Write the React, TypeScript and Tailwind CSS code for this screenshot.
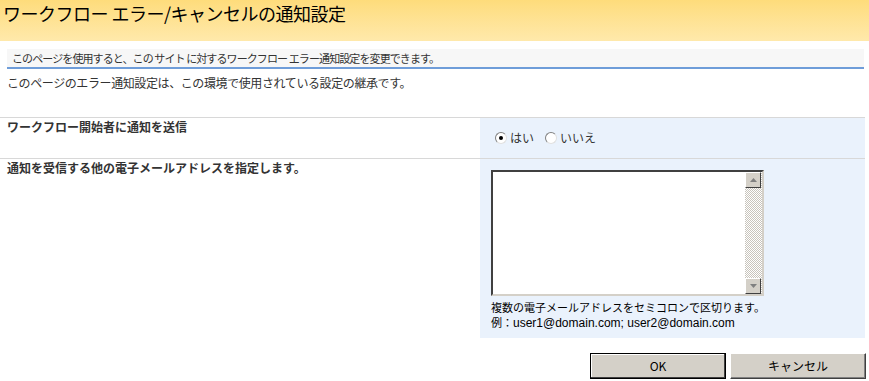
import { useState } from 'react'

const font = { fontFamily: '"Noto Sans CJK JP", "Noto Sans", sans-serif' }

function Radio({ checked, label, onClick }: { checked: boolean; label: string; onClick: () => void }) {
  return (
    <label className="flex cursor-pointer items-center gap-[3px]" onClick={onClick}>
      <span className="flex h-[12px] w-[12px] items-center justify-center rounded-full border border-t-[#808080] border-l-[#808080] border-r-[#e0e0e0] border-b-[#e0e0e0] bg-white">
        {checked && <span className="h-[4px] w-[4px] rounded-full bg-black" />}
      </span>
      <span>{label}</span>
    </label>
  )
}

function ScrollArrow({ up }: { up: boolean }) {
  return (
    <div className="flex h-[16px] w-[16px] items-center justify-center border border-t-white border-l-white border-r-[#404040] border-b-[#404040] bg-[#d4d0c8]">
      <svg width="7" height="4" viewBox="0 0 7 4">
        {up ? <path d="M3.5 0 L7 4 L0 4 Z" fill="#808080" /> : <path d="M0 0 L7 0 L3.5 4 Z" fill="#808080" />}
      </svg>
    </div>
  )
}

export default function App() {
  const [notify, setNotify] = useState(true)

  return (
    <div className="h-[381px] w-[869px] overflow-hidden bg-white text-[12px] text-[#333]" style={font}>
      {/* title band */}
      <div className="h-[41px] bg-gradient-to-b from-[#fedc7b] to-[#ffe9ab] pl-[3px] pt-[1px]">
        <h1 className="text-[18px] leading-[24px] tracking-[-0.5px] text-black">ワークフロー エラー/キャンセルの通知設定</h1>
      </div>

      <div className="ml-[7px] mr-[5px] mt-[8px] h-[20px] border-b-2 border-[#6f9dd9] bg-[#f7f7f7] pl-[5px] text-[11px] leading-[18px] tracking-[-0.9px]">
        このページを使用すると、この&nbsp;サイト&nbsp;に対するワークフロー&nbsp;エラー通知設定を変更できます。
      </div>

      <div className="h-[48px] pl-[7px] pt-[6px] leading-[16px] tracking-[-0.4px]">
        このページのエラー通知設定は、この環境で使用されている設定の継承です。
      </div>

      {/* settings table */}
      <div className="mr-[4px] border-t border-[#d8d8d8]">
        <div className="flex h-[41px] border-b border-[#d8d8d8]">
          <div className="w-[480px] pl-[7px] pt-[1px] font-bold leading-[16px]">ワークフロー開始者に通知を送信</div>
          <div className="flex flex-1 items-start gap-[11px] bg-[#eaf2fc] pl-[15px] pt-[12px] leading-[16px]">
            <Radio checked={notify} label="はい" onClick={() => setNotify(true)} />
            <Radio checked={!notify} label="いいえ" onClick={() => setNotify(false)} />
          </div>
        </div>
        <div className="flex h-[179px]">
          <div className="w-[480px] pl-[7px] pt-[1px] font-bold leading-[16px]">通知を受信する他の電子メールアドレスを指定します。</div>
          <div className="flex-1 bg-[#eaf2fc] pl-[11px] pt-[11px]">
            <div className="flex h-[126px] w-[273px] border-2 border-t-[#404040] border-l-[#404040] border-r-[#d4d0c8] border-b-[#d4d0c8] bg-white">
              <textarea className="flex-1 resize-none outline-none" />
              <div className="flex w-[17px] flex-col bg-[repeating-conic-gradient(#c8c4bc_0_25%,#ffffff_0_50%)] bg-[length:2px_2px]">
                <ScrollArrow up />
                <div className="flex-1" />
                <ScrollArrow up={false} />
              </div>
            </div>
            <div className="mt-[4px] text-[11px] leading-[15px] text-black">
              <div>複数の電子メールアドレスをセミコロンで区切ります。</div>
              <div>
                例：<span className="text-[12px]" style={{ fontFamily: '"Liberation Sans", sans-serif' }}>user1@domain.com; user2@domain.com</span>
              </div>
            </div>
          </div>
        </div>
      </div>

      {/* buttons */}
      <div className="mt-[15px] flex justify-end gap-[4px] pr-[3px]">
        <button className="h-[26px] w-[136px] border border-black bg-[#d4d0c8] text-[12px] text-black shadow-[inset_-1px_-1px_#404040,inset_1px_1px_#fff]">
          OK
        </button>
        <button className="h-[26px] w-[136px] border border-t-white border-l-white border-r-[#404040] border-b-[#404040] bg-[#d4d0c8] text-[12px] text-black shadow-[inset_-1px_-1px_#808080]">
          キャンセル
        </button>
      </div>
    </div>
  )
}
